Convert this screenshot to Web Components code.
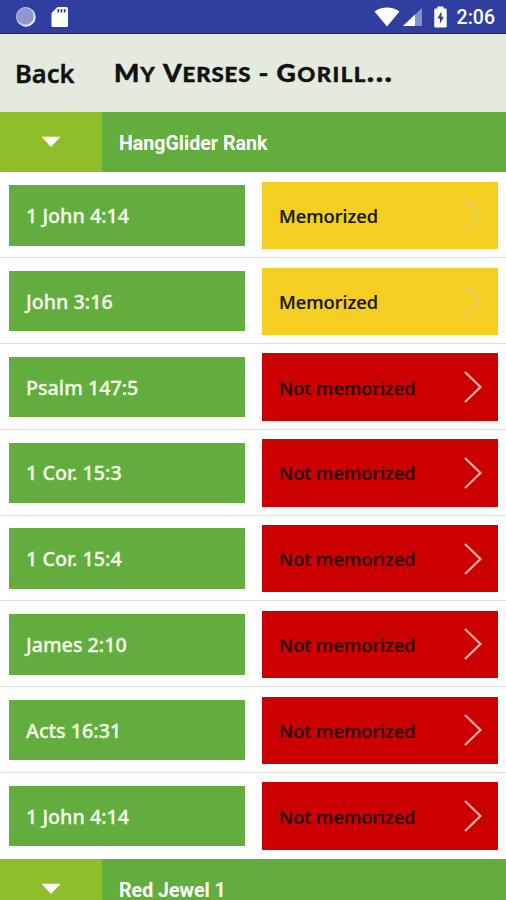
<!DOCTYPE html>
<html lang="en">
<head>
<meta charset="UTF-8">
<title>My Verses</title>
<style>
  body {
    margin: 0;
    height: 900px;
    overflow: hidden;
    background: #fefefe;
    font-family: "Noto Sans", "Open Sans", sans-serif;
  }
</style>
</head>
<body>
<verses-app></verses-app>

<script>
class StatusBar extends HTMLElement {
  connectedCallback() {
    this.attachShadow({ mode: 'open' });
    this.shadowRoot.innerHTML = `
      <style>
        :host {
          display: flex;
          align-items: center;
          box-sizing: border-box;
          height: 34px;
          padding: 0 11px 0 15px;
          background: #303f9f;
          border-bottom: 1px solid #16209a;
          color: #fff;
          font: 500 19.5px/34px Roboto, sans-serif;
        }
        svg { display: block; flex: none; }
        .sd { margin-left: 14px; }
        .wifi { margin-left: auto; }
        .signal { margin-left: 3px; }
        .battery { margin-left: 11px; }
        .time { margin-left: 10px; padding-top: 3px; }
      </style>
      <svg width="22" height="22" viewBox="0 0 22 22">
        <circle cx="11" cy="11" r="9.7" fill="#eef0fa"/>
        <circle cx="10.2" cy="10.2" r="8.6" fill="#8d98d0" stroke="#b3bbdf"/>
      </svg>
      <svg class="sd" width="18" height="22" viewBox="0 0 18 22">
        <path d="M6.5 1H15.5A1.5 1.5 0 0 1 17 2.5V19.5A1.5 1.5 0 0 1 15.5 21H2A1.5 1.5 0 0 1 .5 19.5V7Z" fill="#fff"/>
        <path d="M7.3 3V6.5M10.5 3V6.5M13.7 3V6.5" stroke="#303f9f" stroke-width="1.7"/>
      </svg>
      <svg class="wifi" width="26" height="20" viewBox="0 0 26 20">
        <path d="M.5 4.6C7.5-.8 18.5-.8 25.5 4.6L13 19.5Z" fill="#fff"/>
      </svg>
      <svg class="signal" width="20" height="20" viewBox="0 0 20 20">
        <path d="M0 19L19 1V19Z" fill="#8791c9"/>
        <path d="M0 19L12 7.6V19Z" fill="#fff"/>
      </svg>
      <svg class="battery" width="13" height="22" viewBox="0 0 13 22">
        <path d="M3.5 2.5V.5H9.5V2.5H11.5Q12.7 2.5 12.7 3.7V20.3Q12.7 21.5 11.5 21.5H1.5Q.3 21.5 .3 20.3V3.7Q.3 2.5 1.5 2.5Z" fill="#fff"/>
        <path d="M7.5 5.5L3.3 12.6H5.9V18L9.8 10.7H7.5Z" fill="#303f9f"/>
      </svg>
      <span class="time"><slot></slot></span>
    `;
  }
}

class TitleBar extends HTMLElement {
  connectedCallback() {
    this.attachShadow({ mode: 'open' });
    // each word gets its own box, so ::first-letter can size its capital
    const words = this.textContent.split(' ')
      .map(word => `<span class="word">${word}</span>`).join(' ');
    this.shadowRoot.innerHTML = `
      <style>
        :host {
          display: flex;
          align-items: center;
          box-sizing: border-box;
          height: 78px;
          padding-left: 15px;
          background: #e4eadd;
          color: #111;
        }
        .back {
          width: 99px;
          font-size: 25.5px;
          font-weight: 600;
          -webkit-text-stroke: 0.4px #111;
        }
        .title {
          font: small-caps 900 28px/30px Lato, sans-serif;
          letter-spacing: 0.8px;
          word-spacing: -1px;
          white-space: nowrap;
          transform: scaleX(1.11) translateY(-1px);
          transform-origin: left;
          -webkit-text-stroke: 0.4px #111;
        }
        .word { display: inline-block; }
        .word:last-child { letter-spacing: 1.3px; }
        .word::first-letter { font-size: 24px; }
      </style>
      <span class="back">Back</span>
      <span class="title">${words}</span>
    `;
  }
}

class SectionHeader extends HTMLElement {
  connectedCallback() {
    this.attachShadow({ mode: 'open' });
    this.shadowRoot.innerHTML = `
      <style>
        :host {
          display: flex;
          height: 60.4px;
          background: #62ad3e;
          color: #fff;
        }
        .toggle {
          display: flex;
          align-items: center;
          justify-content: center;
          width: 102px;
          background: #8fbe2b;
        }
        .name {
          padding-left: 17px;
          font: 700 19.6px/63px Roboto, sans-serif;
        }
      </style>
      <div class="toggle">
        <svg width="20" height="12" viewBox="0 0 20 12"><path d="M.5 .8H19.5L10 11Z" fill="#fff"/></svg>
      </div>
      <div class="name"><slot></slot></div>
    `;
  }
}

class VerseRow extends HTMLElement {
  connectedCallback() {
    const done = this.hasAttribute('memorized');
    this.attachShadow({ mode: 'open' });
    this.shadowRoot.innerHTML = `
      <style>
        :host {
          display: grid;
          grid-template-columns: 1fr 1fr;
          align-items: center;
          gap: 17px;
          box-sizing: border-box;
          height: 85.8px;
          padding: 1.4px 8px 0 9px;
          border-bottom: 1px solid #e0e0e0;
        }
        :host(:last-of-type) { border-bottom-color: transparent; }
        .verse, .status {
          display: flex;
          align-items: center;
          box-sizing: border-box;
          padding-left: 17px;
          font-weight: 500;
        }
        .verse {
          height: 60.4px;
          background: #62ad3e;
          color: #f4fbe9;
          font-size: 19.7px;
          -webkit-text-stroke: 0.3px #f4fbe9;
        }
        .status {
          justify-content: space-between;
          height: 67.4px;
          padding-right: 15px;
          background: ${done ? '#f4cf21' : '#cc0000'};
          color: ${done ? '#151200' : '#250000'};
          font-size: 18.3px;
          -webkit-text-stroke: 0.2px;
        }
      </style>
      <div class="verse"><slot></slot></div>
      <div class="status">
        <span>${done ? 'Memorized' : 'Not memorized'}</span>
        <svg width="20" height="34" viewBox="0 0 20 34">
          <path d="M2 2L17.5 17L2 32" fill="none" stroke="${done ? '#dfcb6a' : '#f5b3a5'}" stroke-width="2.2"/>
        </svg>
      </div>
    `;
  }
}

class VersesApp extends HTMLElement {
  connectedCallback() {
    this.attachShadow({ mode: 'open' });
    this.shadowRoot.innerHTML = `
      <style>
        :host { display: block; }
      </style>
      <status-bar>2:06</status-bar>
      <title-bar>My Verses - Gorill...</title-bar>
      <section-header>HangGlider Rank</section-header>
      <verse-row memorized>1 John 4:14</verse-row>
      <verse-row memorized>John 3:16</verse-row>
      <verse-row>Psalm 147:5</verse-row>
      <verse-row>1 Cor. 15:3</verse-row>
      <verse-row>1 Cor. 15:4</verse-row>
      <verse-row>James 2:10</verse-row>
      <verse-row>Acts 16:31</verse-row>
      <verse-row>1 John 4:14</verse-row>
      <section-header>Red Jewel 1</section-header>
    `;
  }
}

customElements.define('status-bar', StatusBar);
customElements.define('title-bar', TitleBar);
customElements.define('section-header', SectionHeader);
customElements.define('verse-row', VerseRow);
customElements.define('verses-app', VersesApp);
</script>
</body>
</html>
